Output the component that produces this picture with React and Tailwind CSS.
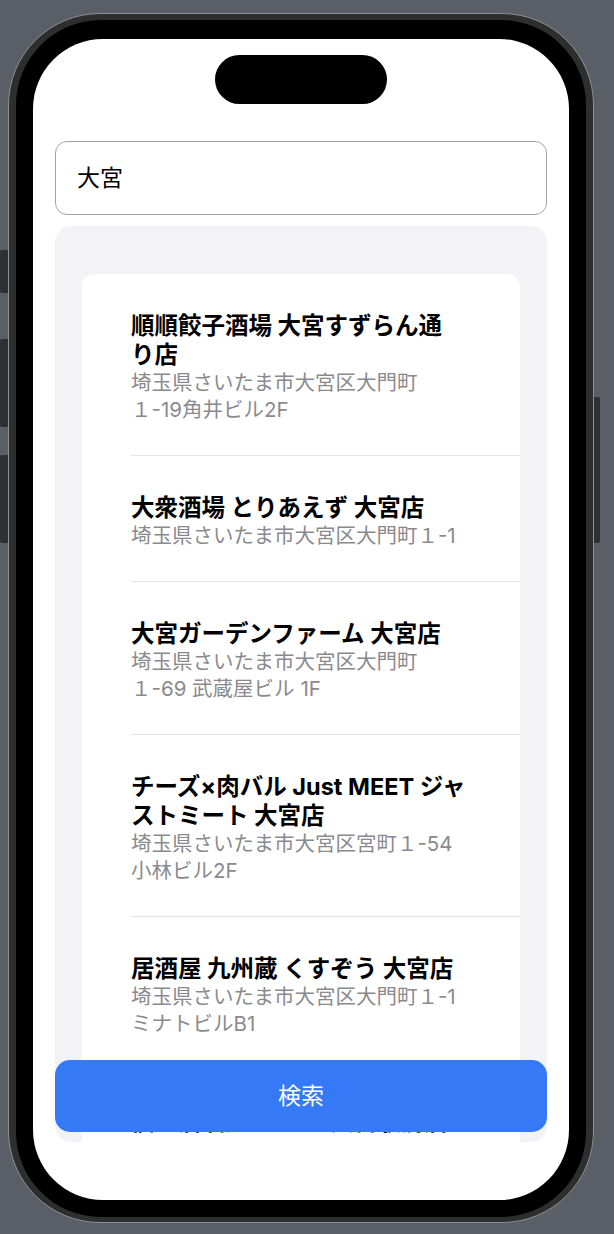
import React from "react";

const FONT = { fontFamily: '"Inter", "Noto Sans CJK JP", sans-serif' };

const items = [
  {
    title: ["順順餃子酒場 大宮すずらん通", "り店"],
    addr: ["埼玉県さいたま市大宮区大門町", "１-19角井ビル2F"],
  },
  {
    title: ["大衆酒場 とりあえず 大宮店"],
    addr: ["埼玉県さいたま市大宮区大門町１-1"],
  },
  {
    title: ["大宮ガーデンファーム 大宮店"],
    addr: ["埼玉県さいたま市大宮区大門町", "１-69 武蔵屋ビル 1F"],
  },
  {
    title: ["チーズ×肉バル Just MEET ジャ", "ストミート 大宮店"],
    addr: ["埼玉県さいたま市大宮区宮町１-54", "小林ビル2F"],
  },
  {
    title: ["居酒屋 九州蔵 くすぞう 大宮店"],
    addr: ["埼玉県さいたま市大宮区大門町１-1", "ミナトビルB1"],
  },
  {
    title: ["個室居酒屋 いろは 大宮駅前店"],
    addr: [],
  },
];

function Row({ item, last }) {
  return (
    <div className={`pt-[37px] pb-[32px] ${last ? "" : "border-b border-[#e3e3e8]"}`}>
      <div className="text-[23.5px] leading-[29px] font-bold text-black">
        {item.title.map((t, i) => (
          <span key={i} className="block whitespace-nowrap">
            {t}
          </span>
        ))}
      </div>
      <div className="text-[20.5px] leading-[27px] text-[#8a8a8e]">
        {item.addr.map((t, i) => (
          <span key={i} className="block whitespace-nowrap">
            {t}
          </span>
        ))}
      </div>
    </div>
  );
}

export default function App() {
  return (
    <div className="min-h-screen w-full bg-[#5a5e66] pl-[8px] pt-[13px]" style={FONT}>
      <div className="relative w-[586px]">
        {/* side buttons */}
        <div className="absolute left-[-8px] top-[237px] h-[43px] w-[8px] rounded-l-[2px] bg-[#2e3034]" />
        <div className="absolute left-[-8px] top-[326px] h-[88px] w-[8px] rounded-l-[2px] bg-[#2e3034]" />
        <div className="absolute left-[-8px] top-[442px] h-[88px] w-[8px] rounded-l-[2px] bg-[#2e3034]" />
        <div className="absolute right-[-6px] top-[384px] h-[146px] w-[6px] rounded-r-[2px] bg-[#2e3034]" />

        {/* frame */}
        <div className="rounded-[92px] border border-[#8d8f94] bg-[#2e2e2f] px-[7px] pt-[6px] pb-[5px]">
          <div className="rounded-[85px] bg-black px-[17px] pt-[19px] pb-[17px]">
            <div className="flex h-[1161px] flex-col overflow-hidden rounded-[70px] bg-white px-[22px]">
              {/* dynamic island */}
              <div className="mx-auto mt-[16px] h-[49px] w-[172px] shrink-0 rounded-full bg-black" />

              {/* input */}
              <div className="mt-[37px] flex h-[74px] shrink-0 items-center rounded-[12px] border border-[#a3a3a5] pl-[21px] text-[23px] text-black">
                大宮
              </div>

              {/* list */}
              <div className="relative mt-[11px] h-[916px] shrink-0 overflow-hidden rounded-[16px] bg-[#f2f2f7]">
                <div className="mx-[27px] mt-[48px] rounded-[12px] bg-white pl-[49px]">
                  {items.map((it, i) => (
                    <Row key={i} item={it} last={i === items.length - 1} />
                  ))}
                </div>

                <div className="absolute bottom-[10px] left-0 right-0 flex h-[72px] items-center justify-center rounded-[15px] bg-[#3579f6] text-[23px] text-white">
                  検索
                </div>
              </div>
            </div>
          </div>
        </div>
      </div>
    </div>
  );
}
